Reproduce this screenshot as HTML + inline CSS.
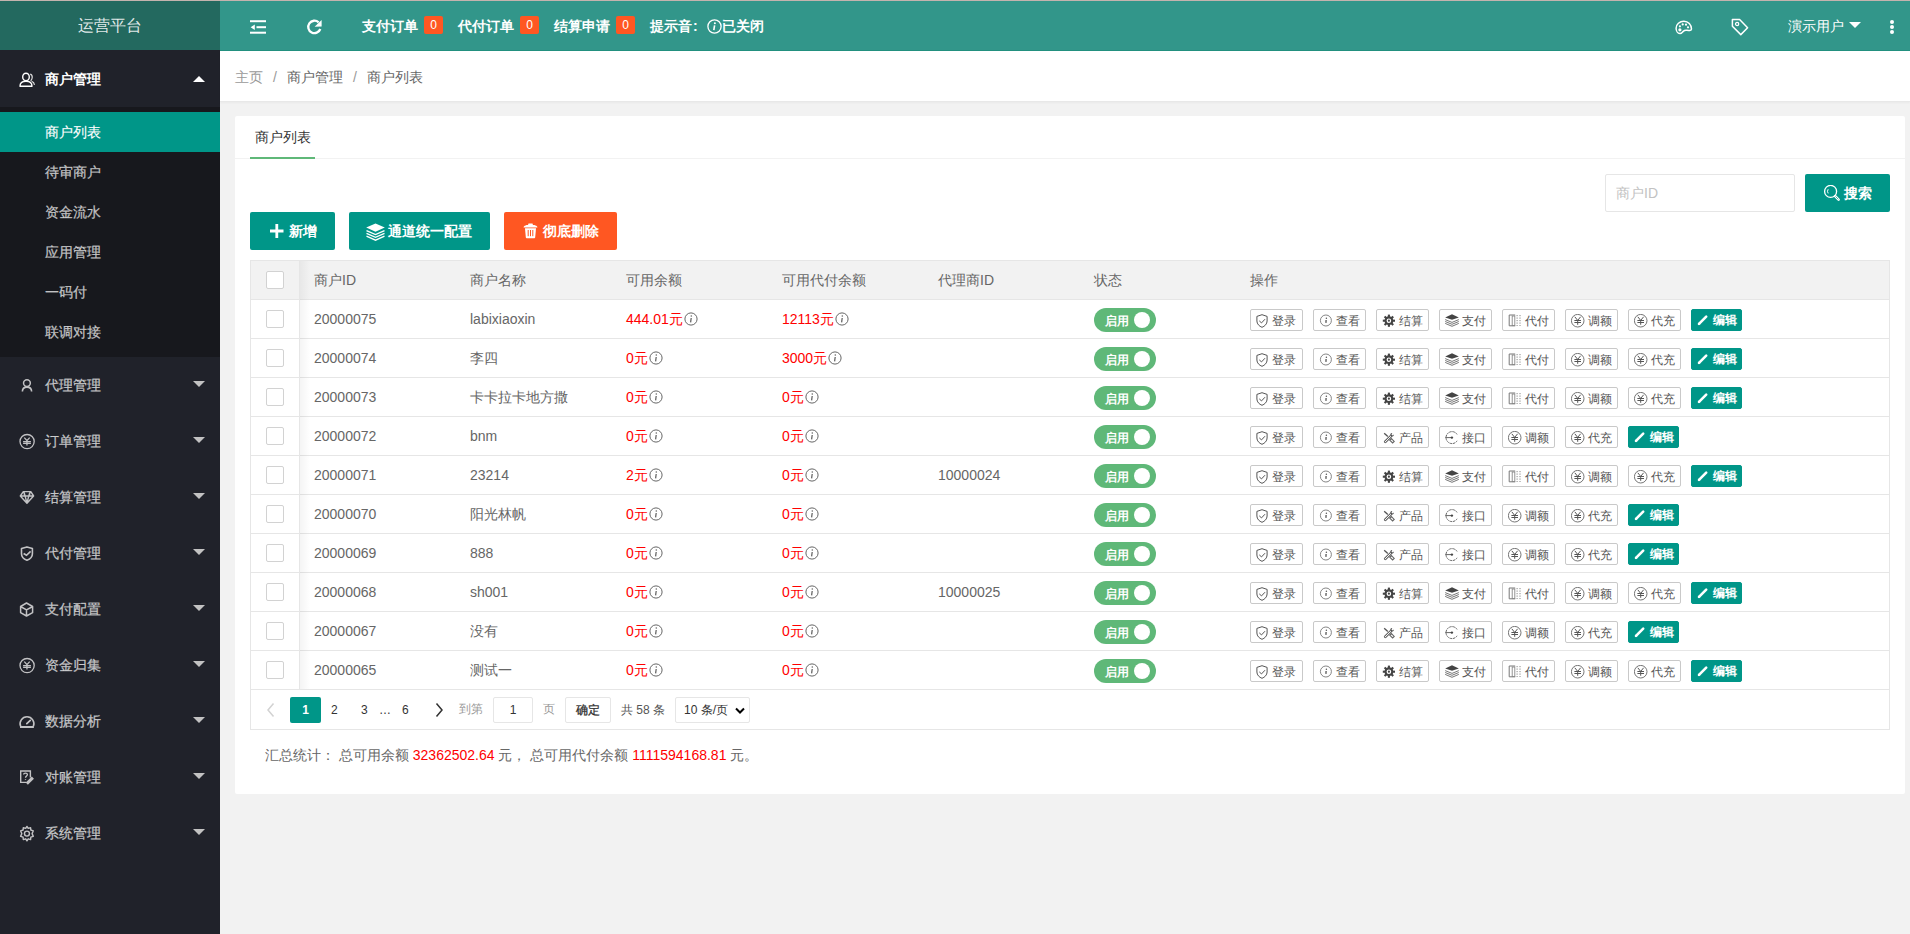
<!DOCTYPE html><html><head><meta charset="utf-8"><style>
*{margin:0;padding:0;box-sizing:border-box}
html,body{width:1910px;height:934px;overflow:hidden;background:#f2f2f2;font-family:"Liberation Sans",sans-serif;font-size:14px;color:#666}
.abs{position:absolute}
#topline{position:absolute;left:0;top:0;width:1910px;height:1px;background:#c4b3ae}
#logo{position:absolute;left:0;top:1px;width:220px;height:49px;background:#23695f;color:rgba(255,255,255,.88);font-size:16px;text-align:center;line-height:49px}
#header{position:absolute;left:220px;top:1px;width:1690px;height:50px;background:#32968a;border-bottom:1px solid #22907f}
#side{position:absolute;left:0;top:50px;width:220px;height:884px;background:#20222a}
.navi{position:absolute;left:0;width:220px;height:56px;line-height:56px;color:rgba(255,255,255,.7);font-size:14px;-webkit-text-stroke:0.3px rgba(255,255,255,.5)}
.navi .t{position:absolute;left:45px;top:1px}
.navi .ic{position:absolute;left:19px;top:21px;width:15px;height:15px}
.navi .ar{position:absolute;left:193px;top:25px;width:0;height:0;border-left:6px solid transparent;border-right:6px solid transparent;border-top:6px solid #c2c2c2}
#child{position:absolute;left:0;top:57px;width:220px;height:250px;background:#17181d}
.cd{position:absolute;left:0;width:220px;height:40px;line-height:40px;color:rgba(255,255,255,.7);padding-left:45px;-webkit-text-stroke:0.3px rgba(255,255,255,.5)}
.cd.on{background:#009688;color:#fff}
#crumb{position:absolute;left:220px;top:51px;width:1690px;height:51px;background:#fff;border-bottom:1px solid #e8e8e8;box-shadow:0 1px 2px rgba(0,0,0,.04);line-height:52px;padding-left:15px;font-size:14px}
#card{position:absolute;left:235px;top:116px;width:1670px;height:678px;background:#fff;border-radius:2px}
.hd{color:#fff}
.badge{position:absolute;top:16px;height:18px;min-width:19px;line-height:18px;background:#ff5722;color:#fff;text-align:center;font-size:12px;border-radius:2px}
.btn{position:absolute;height:38px;line-height:38px;color:#fff;background:#009688;border-radius:2px;font-size:14px;text-align:center}
table{border-collapse:collapse}
#tbl{position:absolute;left:250px;top:260px;width:1640px;height:470px;border:1px solid #e6e6e6;background:#fff}
.th{position:absolute;left:0;top:0;width:1638px;height:39px;background:#f2f2f2;border-bottom:1px solid #e6e6e6}
.row{position:absolute;left:0;width:1638px;height:39px;border-bottom:1px solid #e6e6e6}
.cell{position:absolute;top:0;line-height:38px;white-space:nowrap}
.cb{position:absolute;left:15px;width:18px;height:18px;border:1px solid #d2d2d2;border-radius:2px;background:#fff}
.red{color:#ff0000}
.sw{position:absolute;left:843px;top:8px;width:62px;height:24px;border-radius:20px;background:#5fb878;color:#fff;font-size:12px;line-height:24px}
.sw span{position:absolute;left:11px;top:1px;font-weight:bold}
.sw i{position:absolute;left:40px;top:4px;width:16px;height:16px;border-radius:50%;background:#fff}
.ab{position:absolute;top:9px;height:22px;line-height:20px;border:1px solid #c9c9c9;border-radius:2px;font-size:12px;color:#555;background:#fff;white-space:nowrap}
.ab.ed{background:#009688;border-color:#009688;color:#fff}
.ab svg{position:absolute;left:6px;top:4px}
.ab span{position:absolute;left:22px;top:1px}
.ab.ed span{top:0;font-weight:bold}
</style></head><body>
<div id="topline"></div>
<div id="logo">运营平台</div>
<div id="header">
<svg class="abs" style="left:30px;top:18px" width="16" height="16" viewBox="0 0 16 16" fill="#fff"><rect x="0" y="1.2" width="16" height="2"/><rect x="6.5" y="7.2" width="9.5" height="2"/><polygon points="0.6,8.2 4.8,5.4 4.8,11"/><rect x="0" y="12.7" width="16" height="2"/></svg>
<svg class="abs" style="left:86px;top:18px" width="17" height="17" viewBox="0 0 17 17"><path d="M12.6 3.3 A6.2 6.2 0 1 0 14.3 10" fill="none" stroke="#fff" stroke-width="2.3"/><polygon points="15.6,0.9 15.6,7.6 8.6,7.8" fill="#fff"/></svg>
<span class="abs hd" style="left:142px;top:0;line-height:50px;font-weight:bold">支付订单</span>
<span class="badge" style="left:204px;top:15px">0</span>
<span class="abs hd" style="left:238px;top:0;line-height:50px;font-weight:bold">代付订单</span>
<span class="badge" style="left:300px;top:15px">0</span>
<span class="abs hd" style="left:334px;top:0;line-height:50px;font-weight:bold">结算申请</span>
<span class="badge" style="left:396px;top:15px">0</span>
<span class="abs hd" style="left:430px;top:0;line-height:50px;font-weight:bold">提示音</span><span class="abs hd" style="left:473px;top:0;line-height:50px;font-weight:bold">:</span>
<svg class="abs" style="left:487px;top:18px" width="15" height="15" viewBox="0 0 15 15"><circle cx="7.5" cy="7.5" r="6.6" fill="none" stroke="#fff" stroke-width="1.3"/><circle cx="7.9" cy="4.2" r="1" fill="#fff"/><path d="M7.6 6.3 L6.8 11.2" stroke="#fff" stroke-width="1.6"/></svg>
<span class="abs hd" style="left:502px;top:0;line-height:50px;font-weight:bold">已关闭</span>
<svg class="abs" style="left:1455px;top:19px" width="18" height="16" viewBox="0 0 18 16"><path d="M8.9 1.2 C4.6 1.2 1.1 4.3 1.1 8.2 C1.1 11 2.7 13.5 4.9 13.6 C6.4 13.7 7.2 12.4 8.2 11.4 C9.3 10.3 10.5 10 12 10.3 C13.5 10.6 16.5 11.2 16.5 9.1 C16.5 4.9 13.2 1.2 8.9 1.2 Z" fill="none" stroke="#fff" stroke-width="1.5"/><circle cx="7.7" cy="4.4" r="1.1" fill="#fff"/><circle cx="11" cy="4.7" r="1.1" fill="#fff"/><circle cx="4.9" cy="6.3" r="1.1" fill="#fff"/><circle cx="13" cy="7.3" r="1.1" fill="#fff"/><circle cx="4.9" cy="9.8" r="1.6" fill="#fff"/></svg>
<svg class="abs" style="left:1511px;top:17px" width="18" height="18" viewBox="0 0 18 18"><path d="M1.4 1.6 L8.6 1.6 L16.6 9.8 L9.8 16.6 L1.4 8.2 Z" fill="none" stroke="#fff" stroke-width="1.5" stroke-linejoin="round"/><circle cx="6.1" cy="6" r="1.6" fill="none" stroke="#fff" stroke-width="1.3"/></svg>
<span class="abs hd" style="left:1568px;top:0;line-height:50px">演示用户</span>
<span class="abs" style="left:1629px;top:21px;width:0;height:0;border-left:6px solid transparent;border-right:6px solid transparent;border-top:6px solid #fff"></span>
<span class="abs" style="left:1670px;top:19px;width:4px;height:4px;border-radius:50%;background:#fff"></span>
<span class="abs" style="left:1670px;top:24px;width:4px;height:4px;border-radius:50%;background:#fff"></span>
<span class="abs" style="left:1670px;top:29px;width:4px;height:4px;border-radius:50%;background:#fff"></span>
</div>
<div id="side">
<div id="child"></div>
<div class="navi" style="top:0px;color:#fff;font-weight:bold;-webkit-text-stroke:0"><span class="t" style="top:1px">商户管理</span><svg class="abs" style="left:14px;top:16px" width="26" height="26" viewBox="0 0 26 26"><ellipse cx="12" cy="10.9" rx="3.3" ry="3.7" fill="none" stroke="#fff" stroke-width="1.4"/><path d="M6 20.2 C6 17 8.6 15.3 12 15.3 C15.4 15.3 18 17 18 20.2 Z" fill="none" stroke="#fff" stroke-width="1.4" stroke-linejoin="round"/><path d="M16.2 8.1 C17.8 8.5 18.4 10 18.2 11.7 C18 13.2 17.3 14.2 16.6 14.7 M17.6 15.3 C19.4 16 20.3 17.4 20.5 18.9" fill="none" stroke="#ddd" stroke-width="1.2"/></svg><span class="ar" style="top:26px;border-top:0;border-bottom:6px solid #fff"></span></div>
<div class="cd on" style="top:62px">商户列表</div>
<div class="cd" style="top:102px">待审商户</div>
<div class="cd" style="top:142px">资金流水</div>
<div class="cd" style="top:182px">应用管理</div>
<div class="cd" style="top:222px">一码付</div>
<div class="cd" style="top:262px">联调对接</div>
<div class="navi" style="top:306px"><span class="t">代理管理</span><svg class="abs" style="left:14px;top:16px" width="26" height="26" viewBox="0 0 26 26"><circle cx="12.95" cy="11.1" r="3.4" fill="none" stroke="#c2c2c4" stroke-width="1.5"/><path d="M8.4 19.6 C8.4 16.6 10.3 15.1 12.95 15.1 C15.6 15.1 17.6 16.6 17.6 19.6" fill="none" stroke="#c2c2c4" stroke-width="1.6"/></svg><span class="ar"></span></div>
<div class="navi" style="top:362px"><span class="t">订单管理</span><svg class="abs" style="left:14px;top:16px" width="26" height="26" viewBox="0 0 26 26"><circle cx="13.1" cy="13.6" r="7.1" fill="none" stroke="#c2c2c4" stroke-width="1.3"/><path d="M10.3 9.6 L12.95 12.6 L15.7 9.6 M9.1 13.7 H16.9 M9.1 15.3 H16.9 M12.95 12.6 V17.5" fill="none" stroke="#c2c2c4" stroke-width="1.3"/></svg><span class="ar"></span></div>
<div class="navi" style="top:418px"><span class="t">结算管理</span><svg class="abs" style="left:14px;top:16px" width="26" height="26" viewBox="0 0 26 26"><path d="M9.3 7.6 H16.8 L19.6 12 L12.95 19.2 L6.3 12 Z M6.6 12 H19.3 M10.4 9.4 L12.95 19 L15.5 9.4 M10 7.8 L10.6 12 M16 7.8 L15.4 12" fill="none" stroke="#c2c2c4" stroke-width="1.4" stroke-linejoin="round"/></svg><span class="ar"></span></div>
<div class="navi" style="top:474px"><span class="t">代付管理</span><svg class="abs" style="left:14px;top:16px" width="26" height="26" viewBox="0 0 26 26"><path d="M12.95 6.9 L7.5 8.5 V13.8 C7.5 16.9 10 19.2 12.95 20.2 C15.9 19.2 18.4 16.9 18.4 13.8 V8.5 Z" fill="none" stroke="#c2c2c4" stroke-width="1.6" stroke-linejoin="round"/><path d="M9.6 13.5 L12.5 15.3 L16.6 11.4" fill="none" stroke="#c2c2c4" stroke-width="1.6"/></svg><span class="ar"></span></div>
<div class="navi" style="top:530px"><span class="t">支付配置</span><svg class="abs" style="left:14px;top:16px" width="26" height="26" viewBox="0 0 26 26"><path d="M12.5 7 L18.6 10.5 V16.6 L12.5 20 L6.6 16.6 V10.5 Z M7.4 11 L12.5 13.8 L17.8 11 M12.5 13.8 V19" fill="none" stroke="#c2c2c4" stroke-width="1.5" stroke-linejoin="round"/></svg><span class="ar"></span></div>
<div class="navi" style="top:586px"><span class="t">资金归集</span><svg class="abs" style="left:14px;top:16px" width="26" height="26" viewBox="0 0 26 26"><circle cx="13.1" cy="13.6" r="7.1" fill="none" stroke="#c2c2c4" stroke-width="1.3"/><path d="M10.3 9.6 L12.95 12.6 L15.7 9.6 M9.1 13.7 H16.9 M9.1 15.3 H16.9 M12.95 12.6 V17.5" fill="none" stroke="#c2c2c4" stroke-width="1.3"/></svg><span class="ar"></span></div>
<div class="navi" style="top:642px"><span class="t">数据分析</span><svg class="abs" style="left:14px;top:16px" width="26" height="26" viewBox="0 0 26 26"><path d="M6.6 18.3 A6.9 6.9 0 1 1 19.4 18.3" fill="none" stroke="#c2c2c4" stroke-width="1.6"/><rect x="6" y="18" width="13.9" height="2" fill="#c2c2c4"/><path d="M12.8 15.6 L16.3 12.3" stroke="#c2c2c4" stroke-width="1.7" stroke-linecap="round"/></svg><span class="ar"></span></div>
<div class="navi" style="top:698px"><span class="t">对账管理</span><svg class="abs" style="left:14px;top:16px" width="26" height="26" viewBox="0 0 26 26"><path d="M16.4 13.6 V7 H6.7 V18.4 H12.2" fill="none" stroke="#c2c2c4" stroke-width="1.4"/><path d="M9.6 10.6 C9.6 8.6 13.4 8.6 13.4 10.6 C13.4 12 11.5 12 11.5 13.8 M11.5 15 V15.8" fill="none" stroke="#c2c2c4" stroke-width="1.3"/><path d="M12.8 19.6 L18.9 13.6" stroke="#c2c2c4" stroke-width="3"/></svg><span class="ar"></span></div>
<div class="navi" style="top:754px"><span class="t">系统管理</span><svg class="abs" style="left:14px;top:16px" width="26" height="26" viewBox="0 0 26 26"><path d="M12.95 6.4 L14.2 8.4 L16.6 7.6 L16.8 10 L19.3 10.8 L18.1 13.6 L19.3 16.4 L16.8 17.2 L16.6 19.6 L14.2 18.8 L12.95 20.8 L11.7 18.8 L9.3 19.6 L9.1 17.2 L6.6 16.4 L7.8 13.6 L6.6 10.8 L9.1 10 L9.3 7.6 L11.7 8.4 Z" fill="none" stroke="#c2c2c4" stroke-width="1.4" stroke-linejoin="round"/><circle cx="12.95" cy="13.6" r="2.5" fill="none" stroke="#c2c2c4" stroke-width="1.4"/></svg><span class="ar"></span></div>
</div>
<div id="crumb"><span style="color:#999">主页</span><span style="color:#999;margin:0 10px">/</span><span>商户管理</span><span style="color:#999;margin:0 10px">/</span><span>商户列表</span></div>
<div id="card">
<div class="abs" style="left:0;top:42px;width:1670px;height:1px;background:#f2f2f2"></div>
<div class="abs" style="left:15px;top:1px;width:65px;height:42px;line-height:40px;text-align:center;color:#333">商户列表</div>
<div class="abs" style="left:15px;top:41px;width:65px;height:2px;background:#5fb878"></div>
<div class="abs" style="left:1370px;top:58px;width:190px;height:38px;border:1px solid #e6e6e6;border-radius:2px;line-height:36px;padding-left:10px;color:#c2c2c2">商户ID</div>
<div class="btn" style="left:1570px;top:58px;width:85px;font-weight:bold"><svg class="abs" style="left:18px;top:11px" width="18" height="18" viewBox="0 0 18 18"><circle cx="7.6" cy="6.4" r="6" fill="none" stroke="#fff" stroke-width="1.3"/><path d="M5.2 4.2 A3.6 3.6 0 0 0 5.2 8.4" fill="none" stroke="#fff" stroke-width="1"/><path d="M12.2 11.2 L15.6 14.6" stroke="#fff" stroke-width="2.6" stroke-linecap="round"/><path d="M12.4 11.4 L15.4 14.4" stroke="#009688" stroke-width="0.7"/></svg><span class="abs" style="left:39px;top:0">搜索</span></div>
<div class="btn" style="left:15px;top:96px;width:85px;font-weight:bold"><svg class="abs" style="left:20px;top:12px" width="14" height="14" viewBox="0 0 14 14"><path d="M0 7 H13.5 M6.8 0 V14" stroke="#fff" stroke-width="2.8"/></svg><span class="abs" style="left:39px;top:0">新增</span></div>
<div class="btn" style="left:114px;top:96px;width:141px;font-weight:bold"><svg class="abs" style="left:17px;top:11px" width="20" height="18" viewBox="0 0 20 18"><path d="M9.5 0.5 L18.8 4.6 L9.5 8.7 L0.2 4.6 Z" fill="#fff"/><path d="M0.5 7.6 L9.5 11.6 L18.5 7.6 M0.5 10.4 L9.5 14.4 L18.5 10.4 M0.5 13.2 L9.5 17.2 L18.5 13.2" fill="none" stroke="#fff" stroke-width="1.3"/></svg><span class="abs" style="left:39px;top:0">通道统一配置</span></div>
<div class="btn" style="left:269px;top:96px;width:113px;background:#ff5722;font-weight:bold"><svg class="abs" style="left:19px;top:11px" width="16" height="16" viewBox="0 0 16 16"><path d="M0.6 4.4 C0.6 2.6 3.5 1.8 7.5 1.8 C11.5 1.8 14.4 2.6 14.4 4.4 Z" fill="#fff"/><rect x="5.2" y="0.5" width="4.6" height="1.8" rx="0.6" fill="#fff"/><path d="M2 5.2 L2.8 14.2 C2.9 15 3.4 15.3 4 15.3 H11 C11.6 15.3 12.1 15 12.2 14.2 L13 5.2 Z" fill="#fff"/><path d="M5.2 7 V13.2 M7.5 7 V13.2 M9.8 7 V13.2" stroke="#ff5722" stroke-width="1"/></svg><span class="abs" style="left:39px;top:0">彻底删除</span></div>
<div class="abs" style="left:30px;top:628px;line-height:22px;white-space:nowrap">汇总统计：&nbsp;总可用余额 <span class="red">32362502.64</span> 元，&nbsp;总可用代付余额 <span class="red">1111594168.81</span> 元。</div>
</div>
<div id="tbl">
<div class="th">
<div class="cb" style="top:10px"></div>
<div class="cell" style="left:63px">商户ID</div>
<div class="cell" style="left:219px">商户名称</div>
<div class="cell" style="left:375px">可用余额</div>
<div class="cell" style="left:531px">可用代付余额</div>
<div class="cell" style="left:687px">代理商ID</div>
<div class="cell" style="left:843px">状态</div>
<div class="cell" style="left:999px">操作</div>
</div>
<div class="row" style="top:39px">
<div class="cb" style="top:10px"></div>
<div class="cell" style="left:63px">20000075</div>
<div class="cell" style="left:219px">labixiaoxin</div>
<div class="cell red" style="left:375px">444.01元<svg style="display:inline-block;vertical-align:-2px;margin-left:1px" width="14" height="14" viewBox="0 0 14 14"><circle cx="7" cy="7" r="6.1" fill="none" stroke="#666" stroke-width="1"/><circle cx="7.3" cy="4" r="0.8" fill="#666"/><path d="M7.2 6 L6.6 10.4" stroke="#666" stroke-width="1.3"/></svg></div>
<div class="cell red" style="left:531px">12113元<svg style="display:inline-block;vertical-align:-2px;margin-left:1px" width="14" height="14" viewBox="0 0 14 14"><circle cx="7" cy="7" r="6.1" fill="none" stroke="#666" stroke-width="1"/><circle cx="7.3" cy="4" r="0.8" fill="#666"/><path d="M7.2 6 L6.6 10.4" stroke="#666" stroke-width="1.3"/></svg></div>
<div class="cell" style="left:687px"></div>
<div class="sw"><span>启用</span><i></i></div>
<div class="ab" style="left:999px;width:53px"><svg width="14" height="14" viewBox="0 0 14 14" style="left:5px;top:4px"><path d="M6 0.7 L0.9 2.4 V7 C0.9 10 3.3 12.3 6 13.3 C8.7 12.3 11.1 10 11.1 7 V2.4 Z" fill="none" stroke="#555" stroke-width="1"/><path d="M3.3 6.9 L5.5 8.9 L9 5.2" fill="none" stroke="#555" stroke-width="1"/></svg><span style="left:21px">登录</span></div>
<div class="ab" style="left:1062px;width:53px"><svg width="14" height="14" viewBox="0 0 14 14" style="left:5px;top:4px"><circle cx="6.9" cy="6.5" r="5.5" fill="none" stroke="#777" stroke-width="0.9"/><circle cx="7.4" cy="4.3" r="0.75" fill="#555"/><path d="M7.1 6 L6.9 8.9" stroke="#555" stroke-width="1.3"/></svg><span style="left:22px">查看</span></div>
<div class="ab" style="left:1125px;width:53px"><svg width="14" height="14" viewBox="0 0 14 14" style="left:5px;top:4px"><circle cx="6.9" cy="6.7" r="4.4" fill="#444"/><rect x="5.85" y="0.60" width="2.1" height="3" fill="#444" transform="rotate(0 6.90 6.70)"/><rect x="5.85" y="0.60" width="2.1" height="3" fill="#444" transform="rotate(45 6.90 6.70)"/><rect x="5.85" y="0.60" width="2.1" height="3" fill="#444" transform="rotate(90 6.90 6.70)"/><rect x="5.85" y="0.60" width="2.1" height="3" fill="#444" transform="rotate(135 6.90 6.70)"/><rect x="5.85" y="0.60" width="2.1" height="3" fill="#444" transform="rotate(180 6.90 6.70)"/><rect x="5.85" y="0.60" width="2.1" height="3" fill="#444" transform="rotate(225 6.90 6.70)"/><rect x="5.85" y="0.60" width="2.1" height="3" fill="#444" transform="rotate(270 6.90 6.70)"/><rect x="5.85" y="0.60" width="2.1" height="3" fill="#444" transform="rotate(315 6.90 6.70)"/><circle cx="6.9" cy="6.7" r="2.3" fill="#fff"/><circle cx="6.9" cy="6.7" r="1.1" fill="#444"/></svg><span style="left:22px">结算</span></div>
<div class="ab" style="left:1188px;width:53px"><svg width="14" height="14" viewBox="0 0 14 14" style="left:5px;top:4px"><path d="M0.2 3.4 L7 0.2 L13.8 3.4 L7 5.8 Z" fill="#444"/><path d="M0.2 5.6 L7 8.4 L13.8 5.6 M0.2 7.5 L7 10.3 L13.8 7.5 M0.2 9.4 L7 12.3 L13.8 9.4" fill="none" stroke="#666" stroke-width="0.9"/></svg><span style="left:22px">支付</span></div>
<div class="ab" style="left:1251px;width:53px"><svg width="14" height="14" viewBox="0 0 14 14" style="left:5px;top:4px"><path d="M7.2 1 H1.2 V11.8 H7.2" fill="none" stroke="#777" stroke-width="1"/><rect x="4.2" y="2" width="2.6" height="9.6" fill="none" stroke="#888" stroke-width="0.9"/><path d="M9.1 1 V12 M12 1 V12" stroke="#888" stroke-width="1" stroke-dasharray="1.2 1.3"/></svg><span style="left:22px">代付</span></div>
<div class="ab" style="left:1314px;width:53px"><svg width="14" height="14" viewBox="0 0 14 14" style="left:5px;top:4px"><circle cx="6.7" cy="6.7" r="6.3" fill="none" stroke="#666" stroke-width="0.9"/><path d="M3.8 2.8 L6.7 6.4 L9.6 2.8 M3.4 6.5 H10 M3.4 8.5 H10 M6.7 6.4 V10.8" fill="none" stroke="#555" stroke-width="1"/></svg><span style="left:22px">调额</span></div>
<div class="ab" style="left:1377px;width:53px"><svg width="14" height="14" viewBox="0 0 14 14" style="left:5px;top:4px"><circle cx="6.7" cy="6.7" r="6.3" fill="none" stroke="#666" stroke-width="0.9"/><path d="M3.8 2.8 L6.7 6.4 L9.6 2.8 M3.4 6.5 H10 M3.4 8.5 H10 M6.7 6.4 V10.8" fill="none" stroke="#555" stroke-width="1"/></svg><span style="left:22px">代充</span></div>
<div class="ab ed" style="left:1440px;width:51px"><svg width="14" height="14" viewBox="0 0 14 14" style="left:5px;top:4px"><path d="M2 9.8 L9.2 2.6" stroke="#fff" stroke-width="2.6" stroke-linecap="round"/><path d="M1 11 L1.6 8.6 L3.4 10.4 Z" fill="#fff"/></svg><span style="left:21px">编辑</span></div>
</div>
<div class="row" style="top:78px">
<div class="cb" style="top:10px"></div>
<div class="cell" style="left:63px">20000074</div>
<div class="cell" style="left:219px">李四</div>
<div class="cell red" style="left:375px">0元<svg style="display:inline-block;vertical-align:-2px;margin-left:1px" width="14" height="14" viewBox="0 0 14 14"><circle cx="7" cy="7" r="6.1" fill="none" stroke="#666" stroke-width="1"/><circle cx="7.3" cy="4" r="0.8" fill="#666"/><path d="M7.2 6 L6.6 10.4" stroke="#666" stroke-width="1.3"/></svg></div>
<div class="cell red" style="left:531px">3000元<svg style="display:inline-block;vertical-align:-2px;margin-left:1px" width="14" height="14" viewBox="0 0 14 14"><circle cx="7" cy="7" r="6.1" fill="none" stroke="#666" stroke-width="1"/><circle cx="7.3" cy="4" r="0.8" fill="#666"/><path d="M7.2 6 L6.6 10.4" stroke="#666" stroke-width="1.3"/></svg></div>
<div class="cell" style="left:687px"></div>
<div class="sw"><span>启用</span><i></i></div>
<div class="ab" style="left:999px;width:53px"><svg width="14" height="14" viewBox="0 0 14 14" style="left:5px;top:4px"><path d="M6 0.7 L0.9 2.4 V7 C0.9 10 3.3 12.3 6 13.3 C8.7 12.3 11.1 10 11.1 7 V2.4 Z" fill="none" stroke="#555" stroke-width="1"/><path d="M3.3 6.9 L5.5 8.9 L9 5.2" fill="none" stroke="#555" stroke-width="1"/></svg><span style="left:21px">登录</span></div>
<div class="ab" style="left:1062px;width:53px"><svg width="14" height="14" viewBox="0 0 14 14" style="left:5px;top:4px"><circle cx="6.9" cy="6.5" r="5.5" fill="none" stroke="#777" stroke-width="0.9"/><circle cx="7.4" cy="4.3" r="0.75" fill="#555"/><path d="M7.1 6 L6.9 8.9" stroke="#555" stroke-width="1.3"/></svg><span style="left:22px">查看</span></div>
<div class="ab" style="left:1125px;width:53px"><svg width="14" height="14" viewBox="0 0 14 14" style="left:5px;top:4px"><circle cx="6.9" cy="6.7" r="4.4" fill="#444"/><rect x="5.85" y="0.60" width="2.1" height="3" fill="#444" transform="rotate(0 6.90 6.70)"/><rect x="5.85" y="0.60" width="2.1" height="3" fill="#444" transform="rotate(45 6.90 6.70)"/><rect x="5.85" y="0.60" width="2.1" height="3" fill="#444" transform="rotate(90 6.90 6.70)"/><rect x="5.85" y="0.60" width="2.1" height="3" fill="#444" transform="rotate(135 6.90 6.70)"/><rect x="5.85" y="0.60" width="2.1" height="3" fill="#444" transform="rotate(180 6.90 6.70)"/><rect x="5.85" y="0.60" width="2.1" height="3" fill="#444" transform="rotate(225 6.90 6.70)"/><rect x="5.85" y="0.60" width="2.1" height="3" fill="#444" transform="rotate(270 6.90 6.70)"/><rect x="5.85" y="0.60" width="2.1" height="3" fill="#444" transform="rotate(315 6.90 6.70)"/><circle cx="6.9" cy="6.7" r="2.3" fill="#fff"/><circle cx="6.9" cy="6.7" r="1.1" fill="#444"/></svg><span style="left:22px">结算</span></div>
<div class="ab" style="left:1188px;width:53px"><svg width="14" height="14" viewBox="0 0 14 14" style="left:5px;top:4px"><path d="M0.2 3.4 L7 0.2 L13.8 3.4 L7 5.8 Z" fill="#444"/><path d="M0.2 5.6 L7 8.4 L13.8 5.6 M0.2 7.5 L7 10.3 L13.8 7.5 M0.2 9.4 L7 12.3 L13.8 9.4" fill="none" stroke="#666" stroke-width="0.9"/></svg><span style="left:22px">支付</span></div>
<div class="ab" style="left:1251px;width:53px"><svg width="14" height="14" viewBox="0 0 14 14" style="left:5px;top:4px"><path d="M7.2 1 H1.2 V11.8 H7.2" fill="none" stroke="#777" stroke-width="1"/><rect x="4.2" y="2" width="2.6" height="9.6" fill="none" stroke="#888" stroke-width="0.9"/><path d="M9.1 1 V12 M12 1 V12" stroke="#888" stroke-width="1" stroke-dasharray="1.2 1.3"/></svg><span style="left:22px">代付</span></div>
<div class="ab" style="left:1314px;width:53px"><svg width="14" height="14" viewBox="0 0 14 14" style="left:5px;top:4px"><circle cx="6.7" cy="6.7" r="6.3" fill="none" stroke="#666" stroke-width="0.9"/><path d="M3.8 2.8 L6.7 6.4 L9.6 2.8 M3.4 6.5 H10 M3.4 8.5 H10 M6.7 6.4 V10.8" fill="none" stroke="#555" stroke-width="1"/></svg><span style="left:22px">调额</span></div>
<div class="ab" style="left:1377px;width:53px"><svg width="14" height="14" viewBox="0 0 14 14" style="left:5px;top:4px"><circle cx="6.7" cy="6.7" r="6.3" fill="none" stroke="#666" stroke-width="0.9"/><path d="M3.8 2.8 L6.7 6.4 L9.6 2.8 M3.4 6.5 H10 M3.4 8.5 H10 M6.7 6.4 V10.8" fill="none" stroke="#555" stroke-width="1"/></svg><span style="left:22px">代充</span></div>
<div class="ab ed" style="left:1440px;width:51px"><svg width="14" height="14" viewBox="0 0 14 14" style="left:5px;top:4px"><path d="M2 9.8 L9.2 2.6" stroke="#fff" stroke-width="2.6" stroke-linecap="round"/><path d="M1 11 L1.6 8.6 L3.4 10.4 Z" fill="#fff"/></svg><span style="left:21px">编辑</span></div>
</div>
<div class="row" style="top:117px">
<div class="cb" style="top:10px"></div>
<div class="cell" style="left:63px">20000073</div>
<div class="cell" style="left:219px">卡卡拉卡地方撒</div>
<div class="cell red" style="left:375px">0元<svg style="display:inline-block;vertical-align:-2px;margin-left:1px" width="14" height="14" viewBox="0 0 14 14"><circle cx="7" cy="7" r="6.1" fill="none" stroke="#666" stroke-width="1"/><circle cx="7.3" cy="4" r="0.8" fill="#666"/><path d="M7.2 6 L6.6 10.4" stroke="#666" stroke-width="1.3"/></svg></div>
<div class="cell red" style="left:531px">0元<svg style="display:inline-block;vertical-align:-2px;margin-left:1px" width="14" height="14" viewBox="0 0 14 14"><circle cx="7" cy="7" r="6.1" fill="none" stroke="#666" stroke-width="1"/><circle cx="7.3" cy="4" r="0.8" fill="#666"/><path d="M7.2 6 L6.6 10.4" stroke="#666" stroke-width="1.3"/></svg></div>
<div class="cell" style="left:687px"></div>
<div class="sw"><span>启用</span><i></i></div>
<div class="ab" style="left:999px;width:53px"><svg width="14" height="14" viewBox="0 0 14 14" style="left:5px;top:4px"><path d="M6 0.7 L0.9 2.4 V7 C0.9 10 3.3 12.3 6 13.3 C8.7 12.3 11.1 10 11.1 7 V2.4 Z" fill="none" stroke="#555" stroke-width="1"/><path d="M3.3 6.9 L5.5 8.9 L9 5.2" fill="none" stroke="#555" stroke-width="1"/></svg><span style="left:21px">登录</span></div>
<div class="ab" style="left:1062px;width:53px"><svg width="14" height="14" viewBox="0 0 14 14" style="left:5px;top:4px"><circle cx="6.9" cy="6.5" r="5.5" fill="none" stroke="#777" stroke-width="0.9"/><circle cx="7.4" cy="4.3" r="0.75" fill="#555"/><path d="M7.1 6 L6.9 8.9" stroke="#555" stroke-width="1.3"/></svg><span style="left:22px">查看</span></div>
<div class="ab" style="left:1125px;width:53px"><svg width="14" height="14" viewBox="0 0 14 14" style="left:5px;top:4px"><circle cx="6.9" cy="6.7" r="4.4" fill="#444"/><rect x="5.85" y="0.60" width="2.1" height="3" fill="#444" transform="rotate(0 6.90 6.70)"/><rect x="5.85" y="0.60" width="2.1" height="3" fill="#444" transform="rotate(45 6.90 6.70)"/><rect x="5.85" y="0.60" width="2.1" height="3" fill="#444" transform="rotate(90 6.90 6.70)"/><rect x="5.85" y="0.60" width="2.1" height="3" fill="#444" transform="rotate(135 6.90 6.70)"/><rect x="5.85" y="0.60" width="2.1" height="3" fill="#444" transform="rotate(180 6.90 6.70)"/><rect x="5.85" y="0.60" width="2.1" height="3" fill="#444" transform="rotate(225 6.90 6.70)"/><rect x="5.85" y="0.60" width="2.1" height="3" fill="#444" transform="rotate(270 6.90 6.70)"/><rect x="5.85" y="0.60" width="2.1" height="3" fill="#444" transform="rotate(315 6.90 6.70)"/><circle cx="6.9" cy="6.7" r="2.3" fill="#fff"/><circle cx="6.9" cy="6.7" r="1.1" fill="#444"/></svg><span style="left:22px">结算</span></div>
<div class="ab" style="left:1188px;width:53px"><svg width="14" height="14" viewBox="0 0 14 14" style="left:5px;top:4px"><path d="M0.2 3.4 L7 0.2 L13.8 3.4 L7 5.8 Z" fill="#444"/><path d="M0.2 5.6 L7 8.4 L13.8 5.6 M0.2 7.5 L7 10.3 L13.8 7.5 M0.2 9.4 L7 12.3 L13.8 9.4" fill="none" stroke="#666" stroke-width="0.9"/></svg><span style="left:22px">支付</span></div>
<div class="ab" style="left:1251px;width:53px"><svg width="14" height="14" viewBox="0 0 14 14" style="left:5px;top:4px"><path d="M7.2 1 H1.2 V11.8 H7.2" fill="none" stroke="#777" stroke-width="1"/><rect x="4.2" y="2" width="2.6" height="9.6" fill="none" stroke="#888" stroke-width="0.9"/><path d="M9.1 1 V12 M12 1 V12" stroke="#888" stroke-width="1" stroke-dasharray="1.2 1.3"/></svg><span style="left:22px">代付</span></div>
<div class="ab" style="left:1314px;width:53px"><svg width="14" height="14" viewBox="0 0 14 14" style="left:5px;top:4px"><circle cx="6.7" cy="6.7" r="6.3" fill="none" stroke="#666" stroke-width="0.9"/><path d="M3.8 2.8 L6.7 6.4 L9.6 2.8 M3.4 6.5 H10 M3.4 8.5 H10 M6.7 6.4 V10.8" fill="none" stroke="#555" stroke-width="1"/></svg><span style="left:22px">调额</span></div>
<div class="ab" style="left:1377px;width:53px"><svg width="14" height="14" viewBox="0 0 14 14" style="left:5px;top:4px"><circle cx="6.7" cy="6.7" r="6.3" fill="none" stroke="#666" stroke-width="0.9"/><path d="M3.8 2.8 L6.7 6.4 L9.6 2.8 M3.4 6.5 H10 M3.4 8.5 H10 M6.7 6.4 V10.8" fill="none" stroke="#555" stroke-width="1"/></svg><span style="left:22px">代充</span></div>
<div class="ab ed" style="left:1440px;width:51px"><svg width="14" height="14" viewBox="0 0 14 14" style="left:5px;top:4px"><path d="M2 9.8 L9.2 2.6" stroke="#fff" stroke-width="2.6" stroke-linecap="round"/><path d="M1 11 L1.6 8.6 L3.4 10.4 Z" fill="#fff"/></svg><span style="left:21px">编辑</span></div>
</div>
<div class="row" style="top:156px">
<div class="cb" style="top:10px"></div>
<div class="cell" style="left:63px">20000072</div>
<div class="cell" style="left:219px">bnm</div>
<div class="cell red" style="left:375px">0元<svg style="display:inline-block;vertical-align:-2px;margin-left:1px" width="14" height="14" viewBox="0 0 14 14"><circle cx="7" cy="7" r="6.1" fill="none" stroke="#666" stroke-width="1"/><circle cx="7.3" cy="4" r="0.8" fill="#666"/><path d="M7.2 6 L6.6 10.4" stroke="#666" stroke-width="1.3"/></svg></div>
<div class="cell red" style="left:531px">0元<svg style="display:inline-block;vertical-align:-2px;margin-left:1px" width="14" height="14" viewBox="0 0 14 14"><circle cx="7" cy="7" r="6.1" fill="none" stroke="#666" stroke-width="1"/><circle cx="7.3" cy="4" r="0.8" fill="#666"/><path d="M7.2 6 L6.6 10.4" stroke="#666" stroke-width="1.3"/></svg></div>
<div class="cell" style="left:687px"></div>
<div class="sw"><span>启用</span><i></i></div>
<div class="ab" style="left:999px;width:53px"><svg width="14" height="14" viewBox="0 0 14 14" style="left:5px;top:4px"><path d="M6 0.7 L0.9 2.4 V7 C0.9 10 3.3 12.3 6 13.3 C8.7 12.3 11.1 10 11.1 7 V2.4 Z" fill="none" stroke="#555" stroke-width="1"/><path d="M3.3 6.9 L5.5 8.9 L9 5.2" fill="none" stroke="#555" stroke-width="1"/></svg><span style="left:21px">登录</span></div>
<div class="ab" style="left:1062px;width:53px"><svg width="14" height="14" viewBox="0 0 14 14" style="left:5px;top:4px"><circle cx="6.9" cy="6.5" r="5.5" fill="none" stroke="#777" stroke-width="0.9"/><circle cx="7.4" cy="4.3" r="0.75" fill="#555"/><path d="M7.1 6 L6.9 8.9" stroke="#555" stroke-width="1.3"/></svg><span style="left:22px">查看</span></div>
<div class="ab" style="left:1125px;width:53px"><svg width="14" height="14" viewBox="0 0 14 14" style="left:5px;top:4px"><path d="M2.2 2.2 L5.8 5.4" stroke="#555" stroke-width="1.4"/><path d="M7.8 9.2 L9.4 7.6 L12.2 10.4 L10.6 12 Z" fill="none" stroke="#666" stroke-width="1.1"/><path d="M3.3 10.8 L8.6 5.5" stroke="#666" stroke-width="2.8" stroke-linecap="round"/><path d="M3.3 10.8 L8.6 5.5" stroke="#fff" stroke-width="1" stroke-linecap="round"/><path d="M8.2 3.8 C8.2 2.5 9.4 2 10.4 2.1 L9.4 3.3 L10.5 4.4 L11.9 3.6 C12.1 4.9 11 5.9 9.6 5.8 Z" fill="#555"/></svg><span style="left:22px">产品</span></div>
<div class="ab" style="left:1188px;width:53px"><svg width="14" height="14" viewBox="0 0 14 14" style="left:5px;top:4px"><path d="M12.1 3.4 A6 6 0 1 0 12.1 9.8" fill="none" stroke="#666" stroke-width="1" stroke-dasharray="2.4 0.7"/><path d="M0.2 6.6 H6.8" stroke="#666" stroke-width="1"/><circle cx="6.9" cy="6.6" r="1.2" fill="#444"/></svg><span style="left:22px">接口</span></div>
<div class="ab" style="left:1251px;width:53px"><svg width="14" height="14" viewBox="0 0 14 14" style="left:5px;top:4px"><circle cx="6.7" cy="6.7" r="6.3" fill="none" stroke="#666" stroke-width="0.9"/><path d="M3.8 2.8 L6.7 6.4 L9.6 2.8 M3.4 6.5 H10 M3.4 8.5 H10 M6.7 6.4 V10.8" fill="none" stroke="#555" stroke-width="1"/></svg><span style="left:22px">调额</span></div>
<div class="ab" style="left:1314px;width:53px"><svg width="14" height="14" viewBox="0 0 14 14" style="left:5px;top:4px"><circle cx="6.7" cy="6.7" r="6.3" fill="none" stroke="#666" stroke-width="0.9"/><path d="M3.8 2.8 L6.7 6.4 L9.6 2.8 M3.4 6.5 H10 M3.4 8.5 H10 M6.7 6.4 V10.8" fill="none" stroke="#555" stroke-width="1"/></svg><span style="left:22px">代充</span></div>
<div class="ab ed" style="left:1377px;width:51px"><svg width="14" height="14" viewBox="0 0 14 14" style="left:5px;top:4px"><path d="M2 9.8 L9.2 2.6" stroke="#fff" stroke-width="2.6" stroke-linecap="round"/><path d="M1 11 L1.6 8.6 L3.4 10.4 Z" fill="#fff"/></svg><span style="left:21px">编辑</span></div>
</div>
<div class="row" style="top:195px">
<div class="cb" style="top:10px"></div>
<div class="cell" style="left:63px">20000071</div>
<div class="cell" style="left:219px">23214</div>
<div class="cell red" style="left:375px">2元<svg style="display:inline-block;vertical-align:-2px;margin-left:1px" width="14" height="14" viewBox="0 0 14 14"><circle cx="7" cy="7" r="6.1" fill="none" stroke="#666" stroke-width="1"/><circle cx="7.3" cy="4" r="0.8" fill="#666"/><path d="M7.2 6 L6.6 10.4" stroke="#666" stroke-width="1.3"/></svg></div>
<div class="cell red" style="left:531px">0元<svg style="display:inline-block;vertical-align:-2px;margin-left:1px" width="14" height="14" viewBox="0 0 14 14"><circle cx="7" cy="7" r="6.1" fill="none" stroke="#666" stroke-width="1"/><circle cx="7.3" cy="4" r="0.8" fill="#666"/><path d="M7.2 6 L6.6 10.4" stroke="#666" stroke-width="1.3"/></svg></div>
<div class="cell" style="left:687px">10000024</div>
<div class="sw"><span>启用</span><i></i></div>
<div class="ab" style="left:999px;width:53px"><svg width="14" height="14" viewBox="0 0 14 14" style="left:5px;top:4px"><path d="M6 0.7 L0.9 2.4 V7 C0.9 10 3.3 12.3 6 13.3 C8.7 12.3 11.1 10 11.1 7 V2.4 Z" fill="none" stroke="#555" stroke-width="1"/><path d="M3.3 6.9 L5.5 8.9 L9 5.2" fill="none" stroke="#555" stroke-width="1"/></svg><span style="left:21px">登录</span></div>
<div class="ab" style="left:1062px;width:53px"><svg width="14" height="14" viewBox="0 0 14 14" style="left:5px;top:4px"><circle cx="6.9" cy="6.5" r="5.5" fill="none" stroke="#777" stroke-width="0.9"/><circle cx="7.4" cy="4.3" r="0.75" fill="#555"/><path d="M7.1 6 L6.9 8.9" stroke="#555" stroke-width="1.3"/></svg><span style="left:22px">查看</span></div>
<div class="ab" style="left:1125px;width:53px"><svg width="14" height="14" viewBox="0 0 14 14" style="left:5px;top:4px"><circle cx="6.9" cy="6.7" r="4.4" fill="#444"/><rect x="5.85" y="0.60" width="2.1" height="3" fill="#444" transform="rotate(0 6.90 6.70)"/><rect x="5.85" y="0.60" width="2.1" height="3" fill="#444" transform="rotate(45 6.90 6.70)"/><rect x="5.85" y="0.60" width="2.1" height="3" fill="#444" transform="rotate(90 6.90 6.70)"/><rect x="5.85" y="0.60" width="2.1" height="3" fill="#444" transform="rotate(135 6.90 6.70)"/><rect x="5.85" y="0.60" width="2.1" height="3" fill="#444" transform="rotate(180 6.90 6.70)"/><rect x="5.85" y="0.60" width="2.1" height="3" fill="#444" transform="rotate(225 6.90 6.70)"/><rect x="5.85" y="0.60" width="2.1" height="3" fill="#444" transform="rotate(270 6.90 6.70)"/><rect x="5.85" y="0.60" width="2.1" height="3" fill="#444" transform="rotate(315 6.90 6.70)"/><circle cx="6.9" cy="6.7" r="2.3" fill="#fff"/><circle cx="6.9" cy="6.7" r="1.1" fill="#444"/></svg><span style="left:22px">结算</span></div>
<div class="ab" style="left:1188px;width:53px"><svg width="14" height="14" viewBox="0 0 14 14" style="left:5px;top:4px"><path d="M0.2 3.4 L7 0.2 L13.8 3.4 L7 5.8 Z" fill="#444"/><path d="M0.2 5.6 L7 8.4 L13.8 5.6 M0.2 7.5 L7 10.3 L13.8 7.5 M0.2 9.4 L7 12.3 L13.8 9.4" fill="none" stroke="#666" stroke-width="0.9"/></svg><span style="left:22px">支付</span></div>
<div class="ab" style="left:1251px;width:53px"><svg width="14" height="14" viewBox="0 0 14 14" style="left:5px;top:4px"><path d="M7.2 1 H1.2 V11.8 H7.2" fill="none" stroke="#777" stroke-width="1"/><rect x="4.2" y="2" width="2.6" height="9.6" fill="none" stroke="#888" stroke-width="0.9"/><path d="M9.1 1 V12 M12 1 V12" stroke="#888" stroke-width="1" stroke-dasharray="1.2 1.3"/></svg><span style="left:22px">代付</span></div>
<div class="ab" style="left:1314px;width:53px"><svg width="14" height="14" viewBox="0 0 14 14" style="left:5px;top:4px"><circle cx="6.7" cy="6.7" r="6.3" fill="none" stroke="#666" stroke-width="0.9"/><path d="M3.8 2.8 L6.7 6.4 L9.6 2.8 M3.4 6.5 H10 M3.4 8.5 H10 M6.7 6.4 V10.8" fill="none" stroke="#555" stroke-width="1"/></svg><span style="left:22px">调额</span></div>
<div class="ab" style="left:1377px;width:53px"><svg width="14" height="14" viewBox="0 0 14 14" style="left:5px;top:4px"><circle cx="6.7" cy="6.7" r="6.3" fill="none" stroke="#666" stroke-width="0.9"/><path d="M3.8 2.8 L6.7 6.4 L9.6 2.8 M3.4 6.5 H10 M3.4 8.5 H10 M6.7 6.4 V10.8" fill="none" stroke="#555" stroke-width="1"/></svg><span style="left:22px">代充</span></div>
<div class="ab ed" style="left:1440px;width:51px"><svg width="14" height="14" viewBox="0 0 14 14" style="left:5px;top:4px"><path d="M2 9.8 L9.2 2.6" stroke="#fff" stroke-width="2.6" stroke-linecap="round"/><path d="M1 11 L1.6 8.6 L3.4 10.4 Z" fill="#fff"/></svg><span style="left:21px">编辑</span></div>
</div>
<div class="row" style="top:234px">
<div class="cb" style="top:10px"></div>
<div class="cell" style="left:63px">20000070</div>
<div class="cell" style="left:219px">阳光林帆</div>
<div class="cell red" style="left:375px">0元<svg style="display:inline-block;vertical-align:-2px;margin-left:1px" width="14" height="14" viewBox="0 0 14 14"><circle cx="7" cy="7" r="6.1" fill="none" stroke="#666" stroke-width="1"/><circle cx="7.3" cy="4" r="0.8" fill="#666"/><path d="M7.2 6 L6.6 10.4" stroke="#666" stroke-width="1.3"/></svg></div>
<div class="cell red" style="left:531px">0元<svg style="display:inline-block;vertical-align:-2px;margin-left:1px" width="14" height="14" viewBox="0 0 14 14"><circle cx="7" cy="7" r="6.1" fill="none" stroke="#666" stroke-width="1"/><circle cx="7.3" cy="4" r="0.8" fill="#666"/><path d="M7.2 6 L6.6 10.4" stroke="#666" stroke-width="1.3"/></svg></div>
<div class="cell" style="left:687px"></div>
<div class="sw"><span>启用</span><i></i></div>
<div class="ab" style="left:999px;width:53px"><svg width="14" height="14" viewBox="0 0 14 14" style="left:5px;top:4px"><path d="M6 0.7 L0.9 2.4 V7 C0.9 10 3.3 12.3 6 13.3 C8.7 12.3 11.1 10 11.1 7 V2.4 Z" fill="none" stroke="#555" stroke-width="1"/><path d="M3.3 6.9 L5.5 8.9 L9 5.2" fill="none" stroke="#555" stroke-width="1"/></svg><span style="left:21px">登录</span></div>
<div class="ab" style="left:1062px;width:53px"><svg width="14" height="14" viewBox="0 0 14 14" style="left:5px;top:4px"><circle cx="6.9" cy="6.5" r="5.5" fill="none" stroke="#777" stroke-width="0.9"/><circle cx="7.4" cy="4.3" r="0.75" fill="#555"/><path d="M7.1 6 L6.9 8.9" stroke="#555" stroke-width="1.3"/></svg><span style="left:22px">查看</span></div>
<div class="ab" style="left:1125px;width:53px"><svg width="14" height="14" viewBox="0 0 14 14" style="left:5px;top:4px"><path d="M2.2 2.2 L5.8 5.4" stroke="#555" stroke-width="1.4"/><path d="M7.8 9.2 L9.4 7.6 L12.2 10.4 L10.6 12 Z" fill="none" stroke="#666" stroke-width="1.1"/><path d="M3.3 10.8 L8.6 5.5" stroke="#666" stroke-width="2.8" stroke-linecap="round"/><path d="M3.3 10.8 L8.6 5.5" stroke="#fff" stroke-width="1" stroke-linecap="round"/><path d="M8.2 3.8 C8.2 2.5 9.4 2 10.4 2.1 L9.4 3.3 L10.5 4.4 L11.9 3.6 C12.1 4.9 11 5.9 9.6 5.8 Z" fill="#555"/></svg><span style="left:22px">产品</span></div>
<div class="ab" style="left:1188px;width:53px"><svg width="14" height="14" viewBox="0 0 14 14" style="left:5px;top:4px"><path d="M12.1 3.4 A6 6 0 1 0 12.1 9.8" fill="none" stroke="#666" stroke-width="1" stroke-dasharray="2.4 0.7"/><path d="M0.2 6.6 H6.8" stroke="#666" stroke-width="1"/><circle cx="6.9" cy="6.6" r="1.2" fill="#444"/></svg><span style="left:22px">接口</span></div>
<div class="ab" style="left:1251px;width:53px"><svg width="14" height="14" viewBox="0 0 14 14" style="left:5px;top:4px"><circle cx="6.7" cy="6.7" r="6.3" fill="none" stroke="#666" stroke-width="0.9"/><path d="M3.8 2.8 L6.7 6.4 L9.6 2.8 M3.4 6.5 H10 M3.4 8.5 H10 M6.7 6.4 V10.8" fill="none" stroke="#555" stroke-width="1"/></svg><span style="left:22px">调额</span></div>
<div class="ab" style="left:1314px;width:53px"><svg width="14" height="14" viewBox="0 0 14 14" style="left:5px;top:4px"><circle cx="6.7" cy="6.7" r="6.3" fill="none" stroke="#666" stroke-width="0.9"/><path d="M3.8 2.8 L6.7 6.4 L9.6 2.8 M3.4 6.5 H10 M3.4 8.5 H10 M6.7 6.4 V10.8" fill="none" stroke="#555" stroke-width="1"/></svg><span style="left:22px">代充</span></div>
<div class="ab ed" style="left:1377px;width:51px"><svg width="14" height="14" viewBox="0 0 14 14" style="left:5px;top:4px"><path d="M2 9.8 L9.2 2.6" stroke="#fff" stroke-width="2.6" stroke-linecap="round"/><path d="M1 11 L1.6 8.6 L3.4 10.4 Z" fill="#fff"/></svg><span style="left:21px">编辑</span></div>
</div>
<div class="row" style="top:273px">
<div class="cb" style="top:10px"></div>
<div class="cell" style="left:63px">20000069</div>
<div class="cell" style="left:219px">888</div>
<div class="cell red" style="left:375px">0元<svg style="display:inline-block;vertical-align:-2px;margin-left:1px" width="14" height="14" viewBox="0 0 14 14"><circle cx="7" cy="7" r="6.1" fill="none" stroke="#666" stroke-width="1"/><circle cx="7.3" cy="4" r="0.8" fill="#666"/><path d="M7.2 6 L6.6 10.4" stroke="#666" stroke-width="1.3"/></svg></div>
<div class="cell red" style="left:531px">0元<svg style="display:inline-block;vertical-align:-2px;margin-left:1px" width="14" height="14" viewBox="0 0 14 14"><circle cx="7" cy="7" r="6.1" fill="none" stroke="#666" stroke-width="1"/><circle cx="7.3" cy="4" r="0.8" fill="#666"/><path d="M7.2 6 L6.6 10.4" stroke="#666" stroke-width="1.3"/></svg></div>
<div class="cell" style="left:687px"></div>
<div class="sw"><span>启用</span><i></i></div>
<div class="ab" style="left:999px;width:53px"><svg width="14" height="14" viewBox="0 0 14 14" style="left:5px;top:4px"><path d="M6 0.7 L0.9 2.4 V7 C0.9 10 3.3 12.3 6 13.3 C8.7 12.3 11.1 10 11.1 7 V2.4 Z" fill="none" stroke="#555" stroke-width="1"/><path d="M3.3 6.9 L5.5 8.9 L9 5.2" fill="none" stroke="#555" stroke-width="1"/></svg><span style="left:21px">登录</span></div>
<div class="ab" style="left:1062px;width:53px"><svg width="14" height="14" viewBox="0 0 14 14" style="left:5px;top:4px"><circle cx="6.9" cy="6.5" r="5.5" fill="none" stroke="#777" stroke-width="0.9"/><circle cx="7.4" cy="4.3" r="0.75" fill="#555"/><path d="M7.1 6 L6.9 8.9" stroke="#555" stroke-width="1.3"/></svg><span style="left:22px">查看</span></div>
<div class="ab" style="left:1125px;width:53px"><svg width="14" height="14" viewBox="0 0 14 14" style="left:5px;top:4px"><path d="M2.2 2.2 L5.8 5.4" stroke="#555" stroke-width="1.4"/><path d="M7.8 9.2 L9.4 7.6 L12.2 10.4 L10.6 12 Z" fill="none" stroke="#666" stroke-width="1.1"/><path d="M3.3 10.8 L8.6 5.5" stroke="#666" stroke-width="2.8" stroke-linecap="round"/><path d="M3.3 10.8 L8.6 5.5" stroke="#fff" stroke-width="1" stroke-linecap="round"/><path d="M8.2 3.8 C8.2 2.5 9.4 2 10.4 2.1 L9.4 3.3 L10.5 4.4 L11.9 3.6 C12.1 4.9 11 5.9 9.6 5.8 Z" fill="#555"/></svg><span style="left:22px">产品</span></div>
<div class="ab" style="left:1188px;width:53px"><svg width="14" height="14" viewBox="0 0 14 14" style="left:5px;top:4px"><path d="M12.1 3.4 A6 6 0 1 0 12.1 9.8" fill="none" stroke="#666" stroke-width="1" stroke-dasharray="2.4 0.7"/><path d="M0.2 6.6 H6.8" stroke="#666" stroke-width="1"/><circle cx="6.9" cy="6.6" r="1.2" fill="#444"/></svg><span style="left:22px">接口</span></div>
<div class="ab" style="left:1251px;width:53px"><svg width="14" height="14" viewBox="0 0 14 14" style="left:5px;top:4px"><circle cx="6.7" cy="6.7" r="6.3" fill="none" stroke="#666" stroke-width="0.9"/><path d="M3.8 2.8 L6.7 6.4 L9.6 2.8 M3.4 6.5 H10 M3.4 8.5 H10 M6.7 6.4 V10.8" fill="none" stroke="#555" stroke-width="1"/></svg><span style="left:22px">调额</span></div>
<div class="ab" style="left:1314px;width:53px"><svg width="14" height="14" viewBox="0 0 14 14" style="left:5px;top:4px"><circle cx="6.7" cy="6.7" r="6.3" fill="none" stroke="#666" stroke-width="0.9"/><path d="M3.8 2.8 L6.7 6.4 L9.6 2.8 M3.4 6.5 H10 M3.4 8.5 H10 M6.7 6.4 V10.8" fill="none" stroke="#555" stroke-width="1"/></svg><span style="left:22px">代充</span></div>
<div class="ab ed" style="left:1377px;width:51px"><svg width="14" height="14" viewBox="0 0 14 14" style="left:5px;top:4px"><path d="M2 9.8 L9.2 2.6" stroke="#fff" stroke-width="2.6" stroke-linecap="round"/><path d="M1 11 L1.6 8.6 L3.4 10.4 Z" fill="#fff"/></svg><span style="left:21px">编辑</span></div>
</div>
<div class="row" style="top:312px">
<div class="cb" style="top:10px"></div>
<div class="cell" style="left:63px">20000068</div>
<div class="cell" style="left:219px">sh001</div>
<div class="cell red" style="left:375px">0元<svg style="display:inline-block;vertical-align:-2px;margin-left:1px" width="14" height="14" viewBox="0 0 14 14"><circle cx="7" cy="7" r="6.1" fill="none" stroke="#666" stroke-width="1"/><circle cx="7.3" cy="4" r="0.8" fill="#666"/><path d="M7.2 6 L6.6 10.4" stroke="#666" stroke-width="1.3"/></svg></div>
<div class="cell red" style="left:531px">0元<svg style="display:inline-block;vertical-align:-2px;margin-left:1px" width="14" height="14" viewBox="0 0 14 14"><circle cx="7" cy="7" r="6.1" fill="none" stroke="#666" stroke-width="1"/><circle cx="7.3" cy="4" r="0.8" fill="#666"/><path d="M7.2 6 L6.6 10.4" stroke="#666" stroke-width="1.3"/></svg></div>
<div class="cell" style="left:687px">10000025</div>
<div class="sw"><span>启用</span><i></i></div>
<div class="ab" style="left:999px;width:53px"><svg width="14" height="14" viewBox="0 0 14 14" style="left:5px;top:4px"><path d="M6 0.7 L0.9 2.4 V7 C0.9 10 3.3 12.3 6 13.3 C8.7 12.3 11.1 10 11.1 7 V2.4 Z" fill="none" stroke="#555" stroke-width="1"/><path d="M3.3 6.9 L5.5 8.9 L9 5.2" fill="none" stroke="#555" stroke-width="1"/></svg><span style="left:21px">登录</span></div>
<div class="ab" style="left:1062px;width:53px"><svg width="14" height="14" viewBox="0 0 14 14" style="left:5px;top:4px"><circle cx="6.9" cy="6.5" r="5.5" fill="none" stroke="#777" stroke-width="0.9"/><circle cx="7.4" cy="4.3" r="0.75" fill="#555"/><path d="M7.1 6 L6.9 8.9" stroke="#555" stroke-width="1.3"/></svg><span style="left:22px">查看</span></div>
<div class="ab" style="left:1125px;width:53px"><svg width="14" height="14" viewBox="0 0 14 14" style="left:5px;top:4px"><circle cx="6.9" cy="6.7" r="4.4" fill="#444"/><rect x="5.85" y="0.60" width="2.1" height="3" fill="#444" transform="rotate(0 6.90 6.70)"/><rect x="5.85" y="0.60" width="2.1" height="3" fill="#444" transform="rotate(45 6.90 6.70)"/><rect x="5.85" y="0.60" width="2.1" height="3" fill="#444" transform="rotate(90 6.90 6.70)"/><rect x="5.85" y="0.60" width="2.1" height="3" fill="#444" transform="rotate(135 6.90 6.70)"/><rect x="5.85" y="0.60" width="2.1" height="3" fill="#444" transform="rotate(180 6.90 6.70)"/><rect x="5.85" y="0.60" width="2.1" height="3" fill="#444" transform="rotate(225 6.90 6.70)"/><rect x="5.85" y="0.60" width="2.1" height="3" fill="#444" transform="rotate(270 6.90 6.70)"/><rect x="5.85" y="0.60" width="2.1" height="3" fill="#444" transform="rotate(315 6.90 6.70)"/><circle cx="6.9" cy="6.7" r="2.3" fill="#fff"/><circle cx="6.9" cy="6.7" r="1.1" fill="#444"/></svg><span style="left:22px">结算</span></div>
<div class="ab" style="left:1188px;width:53px"><svg width="14" height="14" viewBox="0 0 14 14" style="left:5px;top:4px"><path d="M0.2 3.4 L7 0.2 L13.8 3.4 L7 5.8 Z" fill="#444"/><path d="M0.2 5.6 L7 8.4 L13.8 5.6 M0.2 7.5 L7 10.3 L13.8 7.5 M0.2 9.4 L7 12.3 L13.8 9.4" fill="none" stroke="#666" stroke-width="0.9"/></svg><span style="left:22px">支付</span></div>
<div class="ab" style="left:1251px;width:53px"><svg width="14" height="14" viewBox="0 0 14 14" style="left:5px;top:4px"><path d="M7.2 1 H1.2 V11.8 H7.2" fill="none" stroke="#777" stroke-width="1"/><rect x="4.2" y="2" width="2.6" height="9.6" fill="none" stroke="#888" stroke-width="0.9"/><path d="M9.1 1 V12 M12 1 V12" stroke="#888" stroke-width="1" stroke-dasharray="1.2 1.3"/></svg><span style="left:22px">代付</span></div>
<div class="ab" style="left:1314px;width:53px"><svg width="14" height="14" viewBox="0 0 14 14" style="left:5px;top:4px"><circle cx="6.7" cy="6.7" r="6.3" fill="none" stroke="#666" stroke-width="0.9"/><path d="M3.8 2.8 L6.7 6.4 L9.6 2.8 M3.4 6.5 H10 M3.4 8.5 H10 M6.7 6.4 V10.8" fill="none" stroke="#555" stroke-width="1"/></svg><span style="left:22px">调额</span></div>
<div class="ab" style="left:1377px;width:53px"><svg width="14" height="14" viewBox="0 0 14 14" style="left:5px;top:4px"><circle cx="6.7" cy="6.7" r="6.3" fill="none" stroke="#666" stroke-width="0.9"/><path d="M3.8 2.8 L6.7 6.4 L9.6 2.8 M3.4 6.5 H10 M3.4 8.5 H10 M6.7 6.4 V10.8" fill="none" stroke="#555" stroke-width="1"/></svg><span style="left:22px">代充</span></div>
<div class="ab ed" style="left:1440px;width:51px"><svg width="14" height="14" viewBox="0 0 14 14" style="left:5px;top:4px"><path d="M2 9.8 L9.2 2.6" stroke="#fff" stroke-width="2.6" stroke-linecap="round"/><path d="M1 11 L1.6 8.6 L3.4 10.4 Z" fill="#fff"/></svg><span style="left:21px">编辑</span></div>
</div>
<div class="row" style="top:351px">
<div class="cb" style="top:10px"></div>
<div class="cell" style="left:63px">20000067</div>
<div class="cell" style="left:219px">没有</div>
<div class="cell red" style="left:375px">0元<svg style="display:inline-block;vertical-align:-2px;margin-left:1px" width="14" height="14" viewBox="0 0 14 14"><circle cx="7" cy="7" r="6.1" fill="none" stroke="#666" stroke-width="1"/><circle cx="7.3" cy="4" r="0.8" fill="#666"/><path d="M7.2 6 L6.6 10.4" stroke="#666" stroke-width="1.3"/></svg></div>
<div class="cell red" style="left:531px">0元<svg style="display:inline-block;vertical-align:-2px;margin-left:1px" width="14" height="14" viewBox="0 0 14 14"><circle cx="7" cy="7" r="6.1" fill="none" stroke="#666" stroke-width="1"/><circle cx="7.3" cy="4" r="0.8" fill="#666"/><path d="M7.2 6 L6.6 10.4" stroke="#666" stroke-width="1.3"/></svg></div>
<div class="cell" style="left:687px"></div>
<div class="sw"><span>启用</span><i></i></div>
<div class="ab" style="left:999px;width:53px"><svg width="14" height="14" viewBox="0 0 14 14" style="left:5px;top:4px"><path d="M6 0.7 L0.9 2.4 V7 C0.9 10 3.3 12.3 6 13.3 C8.7 12.3 11.1 10 11.1 7 V2.4 Z" fill="none" stroke="#555" stroke-width="1"/><path d="M3.3 6.9 L5.5 8.9 L9 5.2" fill="none" stroke="#555" stroke-width="1"/></svg><span style="left:21px">登录</span></div>
<div class="ab" style="left:1062px;width:53px"><svg width="14" height="14" viewBox="0 0 14 14" style="left:5px;top:4px"><circle cx="6.9" cy="6.5" r="5.5" fill="none" stroke="#777" stroke-width="0.9"/><circle cx="7.4" cy="4.3" r="0.75" fill="#555"/><path d="M7.1 6 L6.9 8.9" stroke="#555" stroke-width="1.3"/></svg><span style="left:22px">查看</span></div>
<div class="ab" style="left:1125px;width:53px"><svg width="14" height="14" viewBox="0 0 14 14" style="left:5px;top:4px"><path d="M2.2 2.2 L5.8 5.4" stroke="#555" stroke-width="1.4"/><path d="M7.8 9.2 L9.4 7.6 L12.2 10.4 L10.6 12 Z" fill="none" stroke="#666" stroke-width="1.1"/><path d="M3.3 10.8 L8.6 5.5" stroke="#666" stroke-width="2.8" stroke-linecap="round"/><path d="M3.3 10.8 L8.6 5.5" stroke="#fff" stroke-width="1" stroke-linecap="round"/><path d="M8.2 3.8 C8.2 2.5 9.4 2 10.4 2.1 L9.4 3.3 L10.5 4.4 L11.9 3.6 C12.1 4.9 11 5.9 9.6 5.8 Z" fill="#555"/></svg><span style="left:22px">产品</span></div>
<div class="ab" style="left:1188px;width:53px"><svg width="14" height="14" viewBox="0 0 14 14" style="left:5px;top:4px"><path d="M12.1 3.4 A6 6 0 1 0 12.1 9.8" fill="none" stroke="#666" stroke-width="1" stroke-dasharray="2.4 0.7"/><path d="M0.2 6.6 H6.8" stroke="#666" stroke-width="1"/><circle cx="6.9" cy="6.6" r="1.2" fill="#444"/></svg><span style="left:22px">接口</span></div>
<div class="ab" style="left:1251px;width:53px"><svg width="14" height="14" viewBox="0 0 14 14" style="left:5px;top:4px"><circle cx="6.7" cy="6.7" r="6.3" fill="none" stroke="#666" stroke-width="0.9"/><path d="M3.8 2.8 L6.7 6.4 L9.6 2.8 M3.4 6.5 H10 M3.4 8.5 H10 M6.7 6.4 V10.8" fill="none" stroke="#555" stroke-width="1"/></svg><span style="left:22px">调额</span></div>
<div class="ab" style="left:1314px;width:53px"><svg width="14" height="14" viewBox="0 0 14 14" style="left:5px;top:4px"><circle cx="6.7" cy="6.7" r="6.3" fill="none" stroke="#666" stroke-width="0.9"/><path d="M3.8 2.8 L6.7 6.4 L9.6 2.8 M3.4 6.5 H10 M3.4 8.5 H10 M6.7 6.4 V10.8" fill="none" stroke="#555" stroke-width="1"/></svg><span style="left:22px">代充</span></div>
<div class="ab ed" style="left:1377px;width:51px"><svg width="14" height="14" viewBox="0 0 14 14" style="left:5px;top:4px"><path d="M2 9.8 L9.2 2.6" stroke="#fff" stroke-width="2.6" stroke-linecap="round"/><path d="M1 11 L1.6 8.6 L3.4 10.4 Z" fill="#fff"/></svg><span style="left:21px">编辑</span></div>
</div>
<div class="row" style="top:390px">
<div class="cb" style="top:10px"></div>
<div class="cell" style="left:63px">20000065</div>
<div class="cell" style="left:219px">测试一</div>
<div class="cell red" style="left:375px">0元<svg style="display:inline-block;vertical-align:-2px;margin-left:1px" width="14" height="14" viewBox="0 0 14 14"><circle cx="7" cy="7" r="6.1" fill="none" stroke="#666" stroke-width="1"/><circle cx="7.3" cy="4" r="0.8" fill="#666"/><path d="M7.2 6 L6.6 10.4" stroke="#666" stroke-width="1.3"/></svg></div>
<div class="cell red" style="left:531px">0元<svg style="display:inline-block;vertical-align:-2px;margin-left:1px" width="14" height="14" viewBox="0 0 14 14"><circle cx="7" cy="7" r="6.1" fill="none" stroke="#666" stroke-width="1"/><circle cx="7.3" cy="4" r="0.8" fill="#666"/><path d="M7.2 6 L6.6 10.4" stroke="#666" stroke-width="1.3"/></svg></div>
<div class="cell" style="left:687px"></div>
<div class="sw"><span>启用</span><i></i></div>
<div class="ab" style="left:999px;width:53px"><svg width="14" height="14" viewBox="0 0 14 14" style="left:5px;top:4px"><path d="M6 0.7 L0.9 2.4 V7 C0.9 10 3.3 12.3 6 13.3 C8.7 12.3 11.1 10 11.1 7 V2.4 Z" fill="none" stroke="#555" stroke-width="1"/><path d="M3.3 6.9 L5.5 8.9 L9 5.2" fill="none" stroke="#555" stroke-width="1"/></svg><span style="left:21px">登录</span></div>
<div class="ab" style="left:1062px;width:53px"><svg width="14" height="14" viewBox="0 0 14 14" style="left:5px;top:4px"><circle cx="6.9" cy="6.5" r="5.5" fill="none" stroke="#777" stroke-width="0.9"/><circle cx="7.4" cy="4.3" r="0.75" fill="#555"/><path d="M7.1 6 L6.9 8.9" stroke="#555" stroke-width="1.3"/></svg><span style="left:22px">查看</span></div>
<div class="ab" style="left:1125px;width:53px"><svg width="14" height="14" viewBox="0 0 14 14" style="left:5px;top:4px"><circle cx="6.9" cy="6.7" r="4.4" fill="#444"/><rect x="5.85" y="0.60" width="2.1" height="3" fill="#444" transform="rotate(0 6.90 6.70)"/><rect x="5.85" y="0.60" width="2.1" height="3" fill="#444" transform="rotate(45 6.90 6.70)"/><rect x="5.85" y="0.60" width="2.1" height="3" fill="#444" transform="rotate(90 6.90 6.70)"/><rect x="5.85" y="0.60" width="2.1" height="3" fill="#444" transform="rotate(135 6.90 6.70)"/><rect x="5.85" y="0.60" width="2.1" height="3" fill="#444" transform="rotate(180 6.90 6.70)"/><rect x="5.85" y="0.60" width="2.1" height="3" fill="#444" transform="rotate(225 6.90 6.70)"/><rect x="5.85" y="0.60" width="2.1" height="3" fill="#444" transform="rotate(270 6.90 6.70)"/><rect x="5.85" y="0.60" width="2.1" height="3" fill="#444" transform="rotate(315 6.90 6.70)"/><circle cx="6.9" cy="6.7" r="2.3" fill="#fff"/><circle cx="6.9" cy="6.7" r="1.1" fill="#444"/></svg><span style="left:22px">结算</span></div>
<div class="ab" style="left:1188px;width:53px"><svg width="14" height="14" viewBox="0 0 14 14" style="left:5px;top:4px"><path d="M0.2 3.4 L7 0.2 L13.8 3.4 L7 5.8 Z" fill="#444"/><path d="M0.2 5.6 L7 8.4 L13.8 5.6 M0.2 7.5 L7 10.3 L13.8 7.5 M0.2 9.4 L7 12.3 L13.8 9.4" fill="none" stroke="#666" stroke-width="0.9"/></svg><span style="left:22px">支付</span></div>
<div class="ab" style="left:1251px;width:53px"><svg width="14" height="14" viewBox="0 0 14 14" style="left:5px;top:4px"><path d="M7.2 1 H1.2 V11.8 H7.2" fill="none" stroke="#777" stroke-width="1"/><rect x="4.2" y="2" width="2.6" height="9.6" fill="none" stroke="#888" stroke-width="0.9"/><path d="M9.1 1 V12 M12 1 V12" stroke="#888" stroke-width="1" stroke-dasharray="1.2 1.3"/></svg><span style="left:22px">代付</span></div>
<div class="ab" style="left:1314px;width:53px"><svg width="14" height="14" viewBox="0 0 14 14" style="left:5px;top:4px"><circle cx="6.7" cy="6.7" r="6.3" fill="none" stroke="#666" stroke-width="0.9"/><path d="M3.8 2.8 L6.7 6.4 L9.6 2.8 M3.4 6.5 H10 M3.4 8.5 H10 M6.7 6.4 V10.8" fill="none" stroke="#555" stroke-width="1"/></svg><span style="left:22px">调额</span></div>
<div class="ab" style="left:1377px;width:53px"><svg width="14" height="14" viewBox="0 0 14 14" style="left:5px;top:4px"><circle cx="6.7" cy="6.7" r="6.3" fill="none" stroke="#666" stroke-width="0.9"/><path d="M3.8 2.8 L6.7 6.4 L9.6 2.8 M3.4 6.5 H10 M3.4 8.5 H10 M6.7 6.4 V10.8" fill="none" stroke="#555" stroke-width="1"/></svg><span style="left:22px">代充</span></div>
<div class="ab ed" style="left:1440px;width:51px"><svg width="14" height="14" viewBox="0 0 14 14" style="left:5px;top:4px"><path d="M2 9.8 L9.2 2.6" stroke="#fff" stroke-width="2.6" stroke-linecap="round"/><path d="M1 11 L1.6 8.6 L3.4 10.4 Z" fill="#fff"/></svg><span style="left:21px">编辑</span></div>
</div>
<div class="abs" style="left:48px;top:0;width:1px;height:428px;background:#e6e6e6"></div>
<div class="abs" style="left:49px;top:0;width:10px;height:428px;background:linear-gradient(to right,rgba(0,0,0,.045),rgba(0,0,0,0))"></div>
<div class="abs" style="left:0;top:429px;width:1638px;height:39px;font-size:12px;color:#333">
<svg class="abs" style="left:15px;top:12px" width="10" height="16" viewBox="0 0 10 16"><path d="M7.5 1.5 L2 8 L7.5 14.5" fill="none" stroke="#d2d2d2" stroke-width="1.5"/></svg>
<div class="abs" style="left:39px;top:7px;width:31px;height:26px;background:#009688;color:#fff;border-radius:2px;text-align:center;line-height:26px;font-weight:bold">1</div>
<span class="abs" style="left:80px;top:1px;line-height:39px">2</span>
<span class="abs" style="left:110px;top:1px;line-height:39px">3</span>
<span class="abs" style="left:128px;top:1px;line-height:39px;color:#333">…</span>
<span class="abs" style="left:151px;top:1px;line-height:39px">6</span>
<svg class="abs" style="left:183px;top:12px" width="10" height="16" viewBox="0 0 10 16"><path d="M2.5 1.5 L8 8 L2.5 14.5" fill="none" stroke="#333" stroke-width="1.5"/></svg>
<span class="abs" style="left:208px;top:0;line-height:39px;color:#999">到第</span>
<div class="abs" style="left:242px;top:7px;width:40px;height:26px;border:1px solid #e6e6e6;border-radius:2px;text-align:center;line-height:25px">1</div>
<span class="abs" style="left:292px;top:0;line-height:39px;color:#999">页</span>
<div class="abs" style="left:314px;top:7px;width:46px;height:26px;border:1px solid #e6e6e6;border-radius:2px;text-align:center;line-height:25px;color:#222;-webkit-text-stroke:0.3px #444">确定</div>
<span class="abs" style="left:370px;top:1px;line-height:39px;color:#555">共 58 条</span>
<div class="abs" style="left:424px;top:7px;width:75px;height:26px;border:1px solid #e6e6e6;border-radius:2px;line-height:25px;padding-left:8px">10 条/页<svg class="abs" style="left:59px;top:9px" width="10" height="8" viewBox="0 0 10 8"><path d="M1 1.5 L5 5.5 L9 1.5" fill="none" stroke="#000" stroke-width="2"/></svg></div>
</div>
</div>
</body></html>
